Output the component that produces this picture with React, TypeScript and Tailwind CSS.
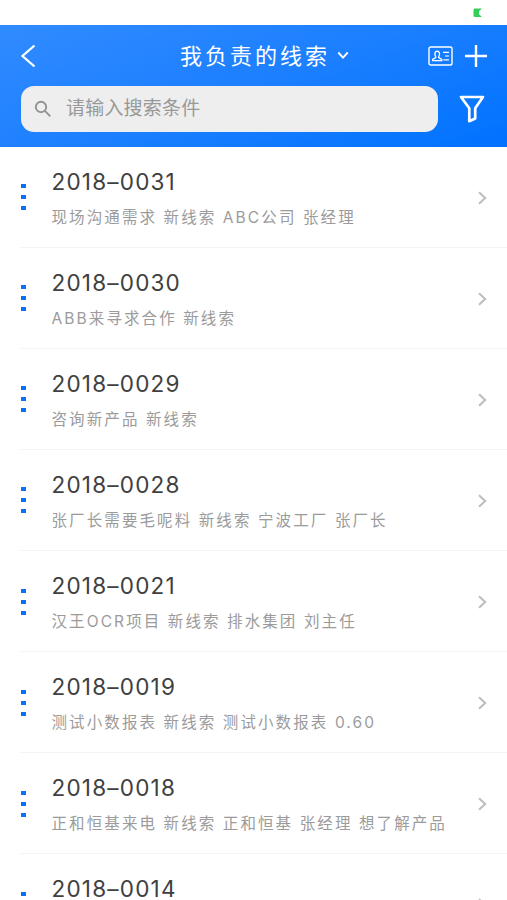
const leads = [
  { code: '2018–0031', info: '现场沟通需求 新线索 ABC公司 张经理' },
  { code: '2018–0030', info: 'ABB来寻求合作 新线索' },
  { code: '2018–0029', info: '咨询新产品 新线索' },
  { code: '2018–0028', info: '张厂长需要毛呢料 新线索 宁波工厂 张厂长' },
  { code: '2018–0021', info: '汉王OCR项目 新线索 排水集团 刘主任' },
  { code: '2018–0019', info: '测试小数报表 新线索 测试小数报表 0.60' },
  { code: '2018–0018', info: '正和恒基来电 新线索 正和恒基 张经理 想了解产品' },
  { code: '2018–0014', info: '' },
];

function StatusBar() {
  return (
    <div className="h-[25px] shrink-0 flex justify-end pt-2 pr-[25px] bg-white">
      <svg width="9" height="10" viewBox="0 0 9 10" fill="#34cf5a">
        <path d="M1.5 0.5H9L6 3.2V6.2L9 9H1.5L0.5 8V1.5Z" />
      </svg>
    </div>
  );
}

function Header() {
  return (
    <header className="h-[121.5px] shrink-0 bg-linear-[160deg] from-[#318bff] via-[#1b7fff] to-[#0072ff]">
      <div className="h-[61px] grid grid-cols-[1fr_auto_1fr] items-center">
        <svg className="ml-[20px]" width="16" height="24" viewBox="0 0 16 24" fill="none" stroke="white" strokeWidth="2.3">
          <path d="M14.5 1.5L2.5 12L14.5 22.5" />
        </svg>
        <div className="flex items-center pl-[22px]">
          <h1 className="text-[22px] leading-8 tracking-[3px] text-white whitespace-nowrap">我负责的线索</h1>
          <svg className="ml-[7px]" width="12" height="9" viewBox="0 0 12 9" fill="none" stroke="white" strokeWidth="1.9">
            <path d="M1.3 1.5L6 6.6L10.7 1.5" />
          </svg>
        </div>
        <div className="flex items-center justify-end pr-[20px] gap-[12px]">
          <svg width="25" height="20" viewBox="0 0 25 20" fill="none" stroke="white" strokeWidth="1.4">
            <rect x="1" y="1" width="23" height="18" rx="1.8" />
            <path d="M4.6 14.6V13.3L7.7 11.7V10.7C6.4 9.3 6.4 5.2 9.2 5.2S12 9.3 10.7 10.7V11.7L13.8 13.3V14.6Z" strokeWidth="1.3" />
            <path d="M15 6.4H21M17 10H21M15.4 13.8H21" strokeWidth="1.2" />
          </svg>
          <svg width="22" height="24" viewBox="0 0 22 24" fill="none" stroke="white" strokeWidth="2.4">
            <path d="M0 12H22M11 1V23" />
          </svg>
        </div>
      </div>
      <div className="flex items-center pl-[21px]">
        <div className="w-[417px] h-[46px] rounded-[13px] bg-[#eeeeee] flex items-center pl-[13px]">
          <svg width="18" height="18" viewBox="0 0 18 18" fill="none" stroke="#929292" strokeWidth="1.9">
            <circle cx="7" cy="7" r="5.2" />
            <path d="M10.9 10.9L16.3 16.3" />
          </svg>
          <span className="ml-[14px] text-[19px] leading-7 tracking-[0.2px] text-[#989898]">请输入搜索条件</span>
        </div>
        <svg className="ml-[21px]" width="26" height="28" viewBox="0 0 26 28" fill="none" stroke="white" strokeWidth="2.7" strokeLinejoin="round">
          <path d="M2 2H24L16.2 13.2V23.5L10.3 26.2V13.2Z" />
        </svg>
      </div>
    </header>
  );
}

function LeadRow({ code, info }: { code: string; info: string }) {
  return (
    <li className="ml-[21px] h-[101.15px] shrink-0 flex border-b border-[#f3f3f3]">
      <div className="flex flex-col gap-[7px] pt-[37.5px] w-[30.5px] shrink-0">
        <i className="w-[5px] h-[4px] bg-[#0a70f5]" />
        <i className="w-[5px] h-[4px] bg-[#0a70f5]" />
        <i className="w-[5px] h-[4px] bg-[#0a70f5]" />
      </div>
      <div className="flex-1 pt-5">
        <div className="text-[22.5px] leading-[30px] tracking-[1.2px] text-[#404040]">{code}</div>
        <div className="mt-[9px] text-[15.5px] leading-6 tracking-[2.1px] text-[#9b9b9b] whitespace-nowrap">{info}</div>
      </div>
      <svg className="mt-[44px] mr-[19px]" width="11" height="14" viewBox="0 0 11 14" fill="none" stroke="#bdbdbd" strokeWidth="2">
        <path d="M2 1.2L8.2 7L2 12.8" />
      </svg>
    </li>
  );
}

export default function App() {
  return (
    <div className="w-[507px] h-[900px] overflow-hidden flex flex-col bg-white font-[Inter,'Noto_Sans_CJK_SC',sans-serif]">
      <StatusBar />
      <Header />
      <ul className="flex flex-col">
        {leads.map((lead) => (
          <LeadRow key={lead.code} code={lead.code} info={lead.info} />
        ))}
      </ul>
    </div>
  );
}
